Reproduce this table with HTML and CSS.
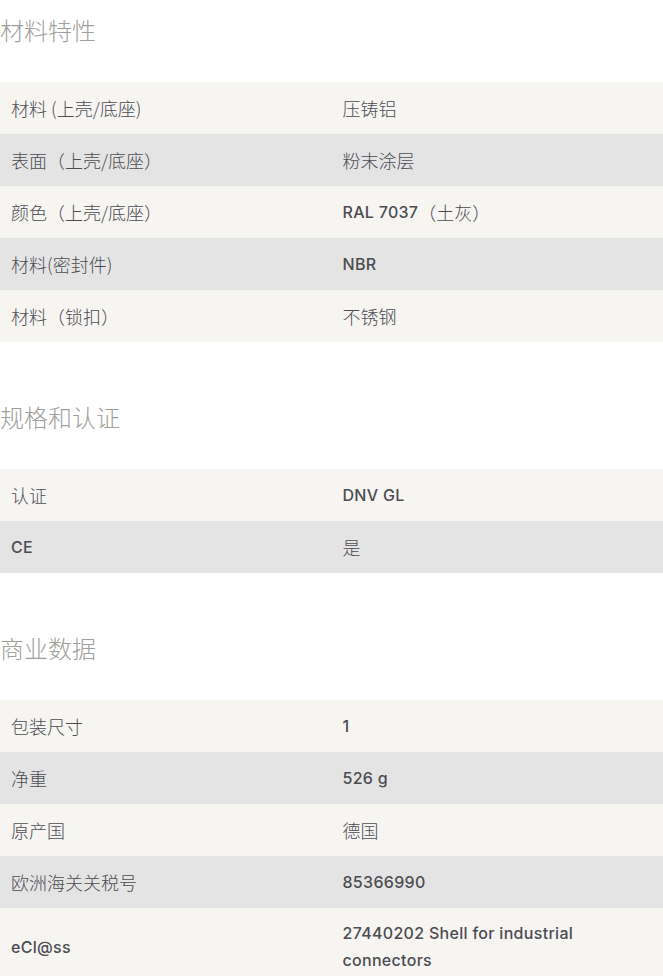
FILE: index.html
```html
<!DOCTYPE html>
<html lang="zh-CN">
<head>
<meta charset="utf-8">
<link rel="stylesheet" href="styles.css">
</head>
<body>
<section class="section">
  <h2 class="title">材料特性</h2>
  <div class="table">
    <div class="row"><div class="cell">材料 (上壳/底座)</div><div class="cell">压铸铝</div></div>
    <div class="row"><div class="cell">表面（上壳/底座）</div><div class="cell">粉末涂层</div></div>
    <div class="row"><div class="cell">颜色（上壳/底座）</div><div class="cell"><span class="lat">RAL 7037</span>（土灰）</div></div>
    <div class="row"><div class="cell">材料(密封件)</div><div class="cell"><span class="lat">NBR</span></div></div>
    <div class="row"><div class="cell">材料（锁扣）</div><div class="cell">不锈钢</div></div>
  </div>
</section>
<section class="section">
  <h2 class="title">规格和认证</h2>
  <div class="table">
    <div class="row"><div class="cell">认证</div><div class="cell"><span class="lat">DNV GL</span></div></div>
    <div class="row"><div class="cell"><span class="lat">CE</span></div><div class="cell">是</div></div>
  </div>
</section>
<section class="section">
  <h2 class="title">商业数据</h2>
  <div class="table">
    <div class="row"><div class="cell">包装尺寸</div><div class="cell"><span class="lat">1</span></div></div>
    <div class="row"><div class="cell">净重</div><div class="cell"><span class="lat">526 g</span></div></div>
    <div class="row"><div class="cell">原产国</div><div class="cell">德国</div></div>
    <div class="row"><div class="cell">欧洲海关关税号</div><div class="cell"><span class="lat">85366990</span></div></div>
    <div class="row"><div class="cell"><span class="lat">eCl@ss</span></div><div class="cell"><span class="lat">27440202 Shell for industrial connectors</span></div></div>
  </div>
</section>
</body>
</html>
```
FILE: styles.css
```css
html, body {
  margin: 0;
  padding: 0;
  background: #ffffff;
}
body {
  font-family: "Noto Sans CJK SC", "Noto Sans", sans-serif;
  font-size: 18px;
  font-weight: 300;
  color: #4c4c52;
}
.section {
  display: flow-root;
}
.section + .section {
  margin-top: 45px;
}
.title {
  margin: 0;
  padding: 12px 0 34px 0;
  font-size: 24px;
  line-height: 36px;
  font-weight: 300;
  color: #9f9f9d;
}
.table {
  display: flex;
  flex-direction: column;
}
.row {
  display: grid;
  grid-template-columns: 1fr 1fr;
}
.row:nth-child(odd) {
  background: #f6f5f2;
}
.row:nth-child(even) {
  background: #e4e4e4;
}
.cell {
  padding: 12px 11px;
  line-height: 28px;
  display: flex;
  align-items: center;
}
.lat {
  font-family: Inter, "Noto Sans CJK SC", sans-serif;
  font-size: 16px;
  font-weight: 500;
  letter-spacing: 0.3px;
  line-height: 27px;
}
```
